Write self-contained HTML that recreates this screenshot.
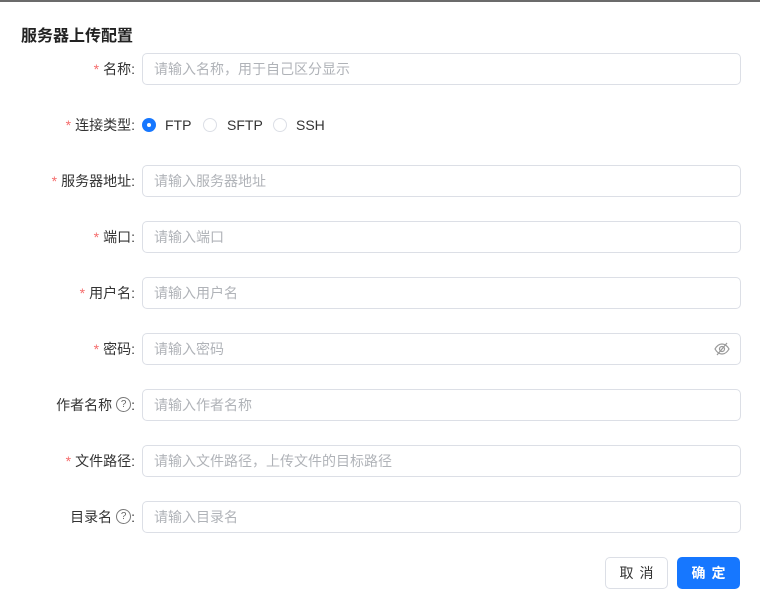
<!DOCTYPE html><html><head><meta charset="utf-8"><style>
body{margin:0;width:760px;height:609px;background:#fff;font-family:"Liberation Sans","Noto Sans CJK SC",sans-serif;position:relative;overflow:hidden;color:#303133}
.top{position:absolute;left:0;top:0;width:760px;height:2px;background:#6b6b6b}
.title{position:absolute;left:21px;top:22px;font-size:16px;font-weight:bold;color:#222}
.row{position:absolute;left:0;width:760px;height:32px}
.lab{position:absolute;right:625px;top:0;line-height:32px;font-size:14px;color:#333;white-space:nowrap}
.lab .s{color:#f56c6c;margin-right:4px}
.inp{position:absolute;left:142px;top:0;height:30px;border:1px solid #dcdfe6;border-radius:5px;line-height:30px;font-size:14px;color:#b0b3b8;padding-left:11px;width:586px}
.q{display:inline-block;width:13px;height:13px;border:1px solid #777;border-radius:50%;font-size:10px;line-height:13px;text-align:center;color:#666;vertical-align:middle;position:relative;top:-2px;margin-left:4px}
.rad{position:absolute;top:9px;width:14px;height:14px;border:1px solid #dcdfe6;border-radius:50%;box-sizing:border-box}
.rt{position:absolute;top:0;line-height:32px;font-size:14px;color:#333}
.btn{position:absolute;top:557px;height:32px;width:63px;border-radius:5px;box-sizing:border-box;font-size:14px;line-height:30px;text-align:center;letter-spacing:6px;padding-left:6px}
</style></head><body>
<div class="top"></div>
<div class="title">服务器上传配置</div>
<div class="row" style="top:53px"><div class="lab"><span class="s">*</span>名称:</div><div class="inp">请输入名称，用于自己区分显示</div></div>
<div class="row" style="top:109px"><div class="lab"><span class="s">*</span>连接类型:</div>
<div class="rad" style="left:142px;background:#1677ff;border:none"><div style="position:absolute;left:5px;top:5px;width:4px;height:4px;border-radius:50%;background:#fff"></div></div><div class="rt" style="left:165px">FTP</div>
<div class="rad" style="left:203px"></div><div class="rt" style="left:227px">SFTP</div>
<div class="rad" style="left:273px"></div><div class="rt" style="left:296px">SSH</div></div>
<div class="row" style="top:165px"><div class="lab"><span class="s">*</span>服务器地址:</div><div class="inp">请输入服务器地址</div></div>
<div class="row" style="top:221px"><div class="lab"><span class="s">*</span>端口:</div><div class="inp">请输入端口</div></div>
<div class="row" style="top:277px"><div class="lab"><span class="s">*</span>用户名:</div><div class="inp">请输入用户名</div></div>
<div class="row" style="top:333px"><div class="lab"><span class="s">*</span>密码:</div><div class="inp">请输入密码
<svg style="position:absolute;right:10px;top:8px" width="16" height="14" viewBox="0 0 16 14" fill="none" stroke="#999" stroke-width="1.2"><path d="M1 7C3 3.5 5.5 2 8 2s5 1.5 7 5c-2 3.5-4.5 5-7 5S3 10.5 1 7z"/><circle cx="8" cy="7" r="2.5"/><path d="M13 1L3 13"/></svg></div></div>
<div class="row" style="top:389px"><div class="lab">作者名称<span class="q">?</span>:</div><div class="inp">请输入作者名称</div></div>
<div class="row" style="top:445px"><div class="lab"><span class="s">*</span>文件路径:</div><div class="inp">请输入文件路径，上传文件的目标路径</div></div>
<div class="row" style="top:501px"><div class="lab">目录名<span class="q">?</span>:</div><div class="inp">请输入目录名</div></div>
<div class="btn" style="left:605px;border:1px solid #dcdfe6;color:#333">取消</div>
<div class="btn" style="left:677px;background:#1677ff;color:#fff;border:1px solid #1677ff;font-weight:bold">确定</div>
</body></html>
